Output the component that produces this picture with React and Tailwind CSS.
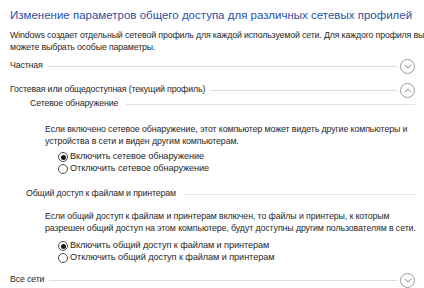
import React from "react";

function Chevron({ up = false }) {
  return (
    <span className="flex h-[15px] w-[15px] shrink-0 items-center justify-center rounded-full border border-[#9a9a9a] bg-white">
      <svg width="8" height="5" viewBox="0 0 8 5" className={up ? "rotate-180" : ""}>
        <path d="M0.7 0.8 L4 4 L7.3 0.8" fill="none" stroke="#8a8a8a" strokeWidth="1" />
      </svg>
    </span>
  );
}

function Profile({ title, up, className = "" }) {
  return (
    <div className={`flex h-[16px] items-center ${className}`}>
      <span className="whitespace-nowrap text-[8.8px] tracking-[-0.15px] text-[#1f1f1f]">{title}</span>
      <span className="ml-[5px] mr-[3px] h-px flex-1 bg-[#dcdcdc]" />
      <Chevron up={up} />
    </div>
  );
}

function Group({ title, className = "" }) {
  return (
    <div className={`flex h-[12px] items-center ${className}`}>
      <span className="whitespace-nowrap text-[8.8px] tracking-[-0.15px] text-[#1f1f1f]">{title}</span>
      <span className="ml-[8px] h-px flex-1 bg-[#e3e3e3]" />
    </div>
  );
}

function Radio({ checked, label }) {
  return (
    <label className="flex h-[12px] items-center gap-[2px] pl-[48px]">
      <span className="flex h-[10px] w-[10px] items-center justify-center rounded-full border border-[#4d4d4d] bg-white">
        {checked && <span className="h-[5px] w-[5px] rounded-full bg-[#1a1a1a]" />}
      </span>
      <span className="whitespace-nowrap text-[9.2px] tracking-[-0.1px] text-[#1f1f1f]">{label}</span>
    </label>
  );
}

export default function App() {
  return (
    <div
      className="h-[288px] w-[424px] overflow-hidden bg-white pl-[10px] pr-[9px] pt-[7px]"
      style={{ fontFamily: '"Liberation Sans", Arial, sans-serif' }}
    >
      <h1 className="h-[16px] whitespace-nowrap text-[11.5px] leading-[16px] font-normal text-[#2b4f9f]">
        Изменение параметров общего доступа для различных сетевых профилей
      </h1>
      <p className="mt-[6px] whitespace-nowrap text-[8.8px] leading-[12px] tracking-[-0.15px] text-[#1f1f1f]">
        Windows создает отдельный сетевой профиль для каждой используемой сети. Для каждого профиля вы
        <br />
        можете выбрать особые параметры.
      </p>

      <Profile title="Частная" className="mt-[5px]" />
      <Profile title="Гостевая или общедоступная (текущий профиль)" up className="mt-[8px]" />

      <div className="pl-[20px]">
        <Group title="Сетевое обнаружение" />
      </div>
      <p className="mt-[13px] whitespace-nowrap pl-[35px] text-[8.8px] leading-[12px] tracking-[-0.1px] text-[#1f1f1f]">
        Если включено сетевое обнаружение, этот компьютер может видеть другие компьютеры и
        <br />
        устройства в сети и виден другим компьютерам.
      </p>
      <div className="mt-[4px]">
        <Radio checked label="Включить сетевое обнаружение" />
        <Radio label="Отключить сетевое обнаружение" />
      </div>

      <div className="mt-[13px] pl-[16px]">
        <Group title="Общий доступ к файлам и принтерам" />
      </div>
      <p className="mt-[10px] whitespace-nowrap pl-[35px] text-[8.8px] leading-[12px] tracking-[-0.1px] text-[#1f1f1f]">
        Если общий доступ к файлам и принтерам включен, то файлы и принтеры, к которым
        <br />
        разрешен общий доступ на этом компьютере, будут доступны другим пользователям в сети.
      </p>
      <div className="mt-[6px]">
        <Radio checked label="Включить общий доступ к файлам и принтерам" />
        <Radio label="Отключить общий доступ к файлам и принтерам" />
      </div>

      <Profile title="Все сети" className="mt-[8px]" />
    </div>
  );
}
